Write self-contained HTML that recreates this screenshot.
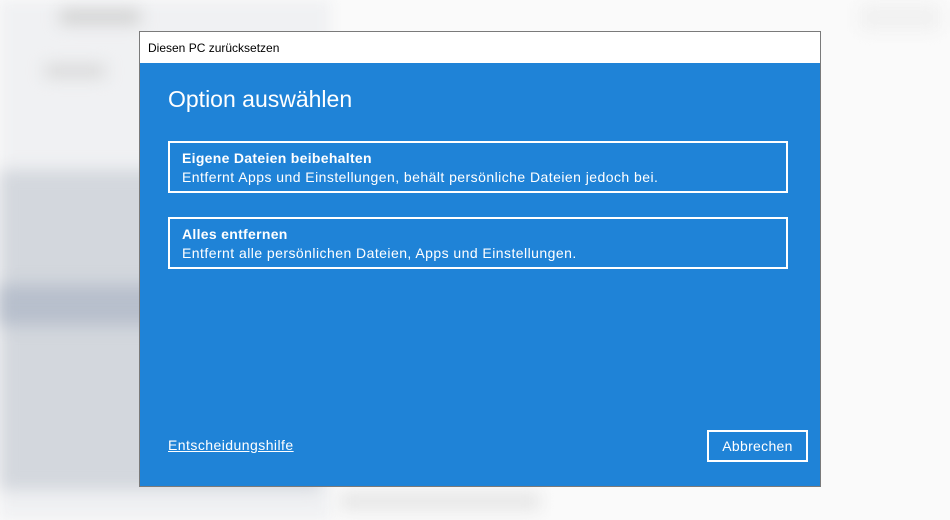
<!DOCTYPE html>
<html><head><meta charset="utf-8"><style>
*{margin:0;padding:0;box-sizing:border-box}
body{width:950px;height:520px;overflow:hidden;background:#fafafa;font-family:"Liberation Sans",sans-serif;position:relative}
.bg{position:absolute;left:0;top:0;width:330px;height:520px;background:#f0f1f3;filter:blur(6px)}
.r{position:absolute;filter:blur(8px)}
.dlg{position:absolute;left:139px;top:31px;width:682px;height:456px;border:1px solid #7a7a7a;background:#1f83d7}
.tb{height:31px;background:#fff;font-size:12px;color:#000;padding:9px 0 0 8px}
h1{position:absolute;left:28px;top:54px;font-weight:normal;font-size:23px;color:#fff}
.box{position:absolute;left:28px;width:620px;height:52px;border:2px solid #fff;color:#fff;padding:6px 0 0 12px;font-size:14px;line-height:19px;letter-spacing:0.45px}
.box b{display:block;letter-spacing:0.3px}
.link{position:absolute;left:28px;top:405px;color:#fff;font-size:14px;text-decoration:underline;letter-spacing:0.45px}
.btn{position:absolute;left:567px;top:398px;width:101px;height:32px;border:2px solid #fff;color:#fff;font-size:14px;text-align:center;line-height:28px;letter-spacing:0.3px}
</style></head><body>
<div class="bg"></div>
<div class="r" style="left:0;top:170px;width:320px;height:320px;background:#d3d7dd"></div>
<div class="r" style="left:0;top:285px;width:320px;height:40px;background:#b7bfcc"></div>
<div class="r" style="left:60px;top:10px;width:80px;height:14px;background:#d0d0d0"></div>
<div class="r" style="left:45px;top:65px;width:60px;height:12px;background:#d6d6d6"></div>
<div class="r" style="left:340px;top:492px;width:200px;height:18px;background:#e6e6e6"></div>
<div class="r" style="left:860px;top:5px;width:80px;height:25px;background:#f0f0f0"></div>
<div class="dlg">
<div class="tb">Diesen PC zurücksetzen</div>
<h1>Option auswählen</h1>
<div class="box" style="top:109px"><b>Eigene Dateien beibehalten</b>Entfernt Apps und Einstellungen, behält persönliche Dateien jedoch bei.</div>
<div class="box" style="top:185px"><b>Alles entfernen</b>Entfernt alle persönlichen Dateien, Apps und Einstellungen.</div>
<div class="link">Entscheidungshilfe</div>
<div class="btn">Abbrechen</div>
</div>
</body></html>
